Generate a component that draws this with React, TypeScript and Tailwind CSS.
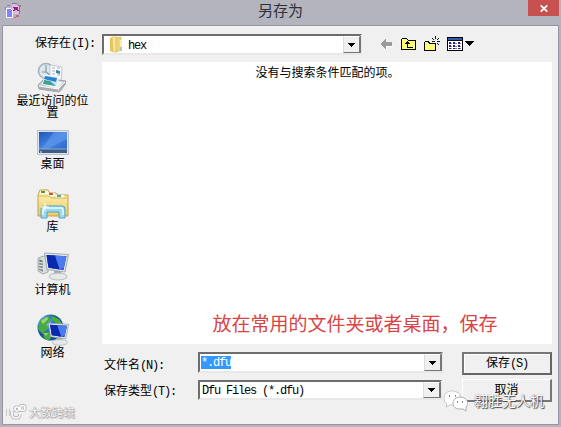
import type { ReactNode } from 'react';

function AppIcon() {
    return (
        <svg width="17" height="17" viewBox="0 0 17 17" shapeRendering="crispEdges">
            <path d="M7 2h5l3 3v7H7z" fill="#d6bfe4" />
            <path d="M7 1h5v1H7zM12 2h1v1h-1zM13 3h1v1h-1zM14 4h1v8h-1z" fill="#8474a0" />
            <path d="M8 5h5v1H8zM9 6h4v2H9zM8 8h2v1H8zM12 8h2v1h-2z" fill="#98246c" />
            <path d="M1.500 6.500h4l2 2v7h-6z" fill="#8484f8" stroke="#f4f4ff" />
            <path d="M2 3h3v1H2zM0 5h1v3H0zM14 3h2v2h-2zM11 13h3v2h-3zM9 15h2v1H9z" fill="#d06474" />
        </svg>
    );
}

function FolderIcon() {
    return (
        <svg width="16" height="17" viewBox="0 0 16 17">
            <path d="M2 2l3-1v15l-3-1z" fill="#e6c65c" />
            <path d="M4 1h5v15H5z" fill="#f8e59b" stroke="#dcb94f" strokeWidth=".6" />
            <path d="M8 2l5-1v13l-5 2z" fill="#efd477" stroke="#d5b14a" strokeWidth=".6" />
            <path d="M12 4h1.500v9L12 14z" fill="#f9edb9" />
            <path d="M13 11v4" stroke="#6aa7bf" />
        </svg>
    );
}

function RecentIcon() {
    return (
        <svg width="32" height="32" viewBox="0 0 32 32">
            <circle cx="9" cy="9" r="7.500" fill="#dde8ed" stroke="#a3b4bb" strokeWidth="1.600" />
            <path d="M9 3v7H5M9 10l4 3" fill="none" stroke="#8298a2" strokeWidth="1.200" />
            <path d="M13 3l12 2-1 14-11-2z" fill="#fbfdff" stroke="#b4bdc3" strokeWidth=".8" />
            <path d="M15 6h3M20 6h3M15 9h3M15 12h3M20 13h3" stroke="#a4b1b9" />
            <path d="M19 8l4 1v3l-4-1z" fill="#3885b5" />
            <path d="M1 23l7-7 21 3-7 11-20-3z" fill="#c7cccf" stroke="#8d9498" strokeWidth=".8" />
            <path d="M4 22l6-5 16 3-5 7z" fill="#eef1f2" />
            <path d="M8 13l13 2-1 10-14-3z" fill="#cae6f8" stroke="#f5faff" />
            <path d="M8 14l12 2-1 4-12-3z" fill="#2a83d2" />
            <path d="M7 18l6 1 6 5-13-2z" fill="#3ca18f" />
            <path d="M2 24l19 3v3L2 27zM22 27l7-8v3l-6 8z" fill="#a7acaf" />
            <path d="M2 24l19 3 7-7" fill="none" stroke="#fff" />
        </svg>
    );
}

function DesktopIcon() {
    return (
        <svg width="32" height="32" viewBox="0 0 32 32">
            <defs>
                <linearGradient id="desk" x2="1" y2="1">
                    <stop stopColor="#1c55b6" />
                    <stop offset=".5" stopColor="#4384e4" />
                    <stop offset="1" stopColor="#2a68c6" />
                </linearGradient>
            </defs>
            <path d="M.5 5.500h31v24H.5z" fill="#dde3ea" stroke="#b9c2cc" />
            <path d="M2 7h28v18H2z" fill="url(#desk)" />
            <path d="M17 7h13v7L9 25H4z" fill="#76aaf0" opacity=".4" />
            <path d="M2 24h28v4H2z" fill="#3f5c86" />
            <path d="M2 24h28" stroke="#91a9c8" />
            <path d="M3 26h2v2H3z" fill="#6cb4e8" />
        </svg>
    );
}

function LibraryIcon() {
    return (
        <svg width="32" height="32" viewBox="0 0 32 32">
            <defs>
                <linearGradient id="lib" x2="0" y2="1">
                    <stop stopColor="#fff4b8" />
                    <stop offset="1" stopColor="#e9cb66" />
                </linearGradient>
            </defs>
            <path d="M1 28V7l2-5h8l2 3h6l2 2h10v21z" fill="url(#lib)" stroke="#c7a149" />
            <path d="M3 3h8v3H3zM11 5h7v3h-7zM19 7h8v3h-8z" fill="#fffdf0" />
            <path d="M4 3h4v2H4z" fill="#42a52c" />
            <path d="M12 5h4v2h-4z" fill="#c95734" />
            <path d="M20 7h4v2h-4z" fill="#4ba4c8" />
            <path d="M1 8h11l3 2h16" fill="none" stroke="#d9b85c" />
            <path d="M4 30V21q0-3 3-3h18q3 0 3 3v9h-6v-6H10v6z" fill="#9cd8f0" stroke="#57a3c8" />
            <path d="M6 27v-5q0-2 2-2h16q2 0 2 2v5" fill="none" stroke="#e5faff" strokeWidth="1.500" />
            <path d="M8 15v8M4 19h8" stroke="#fff" />
            <circle cx="8" cy="19" r="1.500" fill="#fff" />
        </svg>
    );
}

function Monitor() {
    return (
        <g>
            <path d="M17 20h7l1 5h-8z" fill="#aab0b3" />
            <ellipse cx="21" cy="25.500" rx="9" ry="3.500" fill="#e5e9ea" stroke="#a8afb2" strokeWidth=".8" />
            <path d="M7.500 2l24 1.500-3.500 17.500-18-2.500z" fill="#e4e8eb" stroke="#9299a2" strokeWidth=".8" />
            <path d="M9.500 4l20 1.200-3 13.800-15-2.200z" fill="#0c2fb5" />
            <path d="M17 4.500l12.500.7-2.800 12-4.200 1z" fill="#4c7cec" />
            <path d="M9.500 4l8.500.5 4.500 14-11-1.700z" fill="#0a28b0" />
        </g>
    );
}

function ComputerIcon() {
    return (
        <svg width="32" height="32" viewBox="0 0 32 32">
            <path d="M1 7l6-2 4 2v14l-5 2-5-3z" fill="#d9dedf" stroke="#92999c" strokeWidth=".8" />
            <path d="M2 8l4 2v11l-4-2z" fill="#8c9495" />
            <path d="M2 11l4 1M2 14l4 1M2 17l4 1" stroke="#e9eeee" />
            <path d="M3 9h2v2H3z" fill="#39a841" />
            <Monitor />
        </svg>
    );
}

function NetworkIcon() {
    return (
        <svg width="32" height="32" viewBox="0 0 32 32">
            <defs>
                <radialGradient id="globe" cx=".3" cy=".3">
                    <stop stopColor="#a4d8f7" />
                    <stop offset=".5" stopColor="#3789d0" />
                    <stop offset="1" stopColor="#124f9b" />
                </radialGradient>
            </defs>
            <circle cx="13.500" cy="13.500" r="13" fill="url(#globe)" />
            <path d="M3 7l8-5 3 4-5 5 2 3-5 6-5-5zM15 2l7 3 4 6-6-1-5-4zM6 19l6-1 2 5-2 4-5-3z" fill="#49ac3d" />
            <path d="M4 7l6-4 1 2-5 5zM7 19h4l-2 3z" fill="#9adb70" />
            <g transform="translate(5 7.500) scale(.85 .82)">
                <Monitor />
            </g>
        </svg>
    );
}

function Toolbar() {
    return (
        <div className="ml-[18px] flex h-4 items-center">
            <svg width="13" height="12" viewBox="0 0 13 12" shapeRendering="crispEdges">
                <path d="M1 7l6 5V9h6V8" fill="#fff" />
                <path d="M0 6l6-5v3h6v4H6v3z" fill="#9b9b9b" />
            </svg>
            <svg className="ml-2" width="16" height="14" viewBox="0 0 16 14" shapeRendering="crispEdges">
                <path d="M.5 12.500V2.500l1-1h4l2 2h7v9z" fill="#ffff78" stroke="#000" />
                <path d="M4 7h5V6H8V5H7V4H6v1H5v1H4zM6 7h1v3h5v1H6z" fill="#000" />
            </svg>
            <svg className="ml-[7px]" width="17" height="16" viewBox="0 0 17 16" shapeRendering="crispEdges">
                <path d="M.5 14.500v-8l1-1h3l1 2h6v7z" fill="#ffff78" stroke="#000" />
                <path d="M11 0h1v3h-1zM8 2h1v1H8zM9 3h1v1H9zM14 2h1v1h-1zM13 3h1v1h-1zM8 5h3v1H8zM13 5h3v1h-3zM13 7h1v1h-1zM14 8h1v1h-1zM11 7h1v3h-1z" fill="#111" />
            </svg>
            <svg className="ml-[6px]" width="28" height="15" viewBox="0 0 28 15" shapeRendering="crispEdges">
                <path d="M.5.5h15v13H.5z" fill="#fff" stroke="#000" />
                <path d="M1 1h14v2H1z" fill="#305caf" />
                <path d="M1 3h14v1H1z" fill="#111" />
                <path d="M2 5h2v2H2zM6 5h2v2H6zM11 5h2v2h-2zM2 8h2v2H2zM6 8h2v2H6zM11 8h2v2h-2zM2 11h2v1H2zM6 11h2v1H6zM11 11h2v1h-2z" fill="#202080" />
                <path d="M4 6h1M8 6h2M13 6h1M4 9h1M8 9h2M13 9h1M4 11.500h1M8 11.500h2M13 11.500h1" stroke="#888" />
                <path d="M18 4h9v1h-1v1h-1v1h-1v1h-1v1h-1V8h-1V7h-1V6h-1V5h-1z" fill="#000" />
            </svg>
        </div>
    );
}

function Latin({ children }: { children: ReactNode }) {
    return <span className="font-['Liberation_Mono',monospace] text-[12px] tracking-[-1.2px]">{children}</span>;
}

function Combo({ className, children }: { className: string; children: ReactNode }) {
    return (
        <div className={`flex border-2 border-t-[#6d6d6d] border-r-[#e8e8e8] border-b-[#e8e8e8] border-l-[#6d6d6d] bg-white ${className}`}>
            <div className="flex min-w-0 flex-1 items-center whitespace-pre">{children}</div>
            <div className="flex w-[17px] items-center justify-center border border-t-white border-r-[#777] border-b-[#777] border-l-[#ddd] bg-[#f0f0f0] shadow-[1px_0_0_#777]">
                <svg width="7" height="4" viewBox="0 0 7 4" shapeRendering="crispEdges">
                    <path d="M0 0h7v1H6v1H5v1H4v1H3V3H2V2H1V1H0z" fill="#000" />
                </svg>
            </div>
        </div>
    );
}

const places = [
    { label: '最近访问的位置', icon: <RecentIcon /> },
    { label: '桌面', icon: <DesktopIcon /> },
    { label: '库', icon: <LibraryIcon /> },
    { label: '计算机', icon: <ComputerIcon /> },
    { label: '网络', icon: <NetworkIcon /> },
];

export default function App() {
    return (
        <div className="relative flex h-[427px] w-[561px] flex-col overflow-hidden bg-[#b4b4be] font-['Liberation_Sans','Noto_Sans_CJK_SC',sans-serif] text-[12px] leading-[12px] text-black">
            <header className="flex h-[25px] shrink-0 items-start">
                <div className="w-[33px] pt-[2px] pl-[5px]">
                    <AppIcon />
                </div>
                <h1 className="flex-1 pt-[3px] text-center text-[15px] leading-[16px] text-[#303036]">另存为</h1>
                <button className="mr-[2px] flex h-4 w-[31px] items-center justify-center bg-[#c75050]">
                    <svg width="8" height="7" viewBox="0 0 8 7">
                        <path d="M.7.3l6.600 6.400M7.300.3L.7 6.700" stroke="#fff" strokeWidth="1.700" />
                    </svg>
                </button>
            </header>

            <main className="mr-[2px] mb-[2px] ml-[2px] flex min-h-0 flex-1 flex-col border border-[#95959f] bg-[#f0f0f0]">
                <div className="flex h-[36px] shrink-0 items-start pt-[8px]">
                    <div className="w-[99px] pt-[3px] pl-[32px] whitespace-nowrap">
                        保存在<Latin>(I):</Latin>
                    </div>
                    <Combo className="h-[21px] w-[260px]">
                        <span className="mr-[4px] ml-[4px]"><FolderIcon /></span>
                        <span className="pt-[2px]"><Latin>hex</Latin></span>
                    </Combo>
                    <div className="pt-[2px]"><Toolbar /></div>
                </div>

                <div className="flex min-h-0 flex-1">
                    <nav className="w-[99px] shrink-0">
                        {places.map((place) => (
                            <div key={place.label} className="flex h-[63px] flex-col items-center">
                                <div className="h-[33px]">{place.icon}</div>
                                <span className="w-[73px] text-center break-all">{place.label}</span>
                            </div>
                        ))}
                    </nav>

                    <section className="flex flex-1 flex-col">
                        <div className="flex h-[282px] w-[450px] flex-col items-center justify-between bg-white pt-[5px] pb-[9px]">
                            <p className="pl-px">没有与搜索条件匹配的项。</p>
                            <p className="pl-[56px] text-[19px] leading-[20px] whitespace-nowrap text-[#d94444]">放在常用的文件夹或者桌面，保存</p>
                        </div>
                        <div className="flex pt-[8px]">
                            <div className="w-[96px] pt-[7px] pl-[2px] whitespace-nowrap">
                                <div className="h-[26px]">文件名<Latin>(N):</Latin></div>
                                <div>保存类型<Latin>(T):</Latin></div>
                            </div>
                            <div className="w-[264px]">
                                <Combo className="h-[21px] w-[245px]">
                                    <span className="ml-px flex h-[13px] items-center bg-[#3399ff] text-white"><Latin>*.dfu</Latin></span>
                                </Combo>
                                <Combo className="mt-[7px] h-[20px] w-[244px]">
                                    <span className="ml-[2px]"><Latin>Dfu Files (*.dfu)</Latin></span>
                                </Combo>
                            </div>
                            <div className="flex w-[90px] flex-col gap-[4px]">
                                <button className="h-[23px] border-2 border-t-[#777] border-r-[#666] border-b-[#666] border-l-[#777] bg-[#f0f0f0] shadow-[inset_1px_1px_0_white]">
                                    保存<Latin>(S)</Latin>
                                </button>
                                <button className="h-[23px] border-r-2 border-b-2 border-t border-l border-t-white border-r-[#777] border-b-[#777] border-l-white bg-[#f0f0f0]">取消</button>
                            </div>
                        </div>
                    </section>
                </div>
            </main>

            <div className="absolute bottom-[6px] left-[6px] flex items-center gap-[2px] text-[#f7f7f7]">
                <svg width="21" height="17" viewBox="0 0 21 17" fill="none">
                    <path d="M2 5v7M6 7v3q0 4 4 4 4 0 4-4M9 5a2 2 0 1 0 4 0 2 2 0 1 0-4 0M14 4a2.500 2.500 0 1 0 5 0 2.500 2.500 0 1 0-5 0" stroke="#b0b0b0" strokeWidth="3.200" />
                    <path d="M2 5v7M6 7v3q0 4 4 4 4 0 4-4M9 5a2 2 0 1 0 4 0 2 2 0 1 0-4 0M14 4a2.500 2.500 0 1 0 5 0 2.500 2.500 0 1 0-5 0" stroke="#fff" strokeWidth="1.600" />
                </svg>
                <span className="text-[11.500px] [text-shadow:0_0_1px_#888,0_0_1px_#999,1px_1px_1px_#aaa]">大数跨境</span>
            </div>
            <div className="absolute top-[390px] left-[443px] flex items-center gap-[6px] text-white">
                <svg width="25" height="22" viewBox="0 0 25 22">
                    <path d="M9 1C4 1 1 4 1 8c0 3 1 4 3 6l-1 3 4-2h4c5 0 7-3 7-7 0-4-4-7-9-7z" fill="#fff" stroke="#bbb" strokeWidth=".8" />
                    <path d="M17 7c-4 0-7 3-7 6 0 4 3 6 7 6h3l3 2v-4c5-5-1-10-6-10z" fill="#fff" stroke="#999" strokeWidth=".8" />
                    <path d="M6 5h1v2H6zM12 5h1v2h-1zM14 11h1v2h-1zM19 11h1v2h-1z" fill="#888" />
                </svg>
                <span className="text-[14px] leading-[18px] [text-shadow:1px_1px_1px_#444,0_0_1px_#555]">翱胜无人机</span>
            </div>
        </div>
    );
}
